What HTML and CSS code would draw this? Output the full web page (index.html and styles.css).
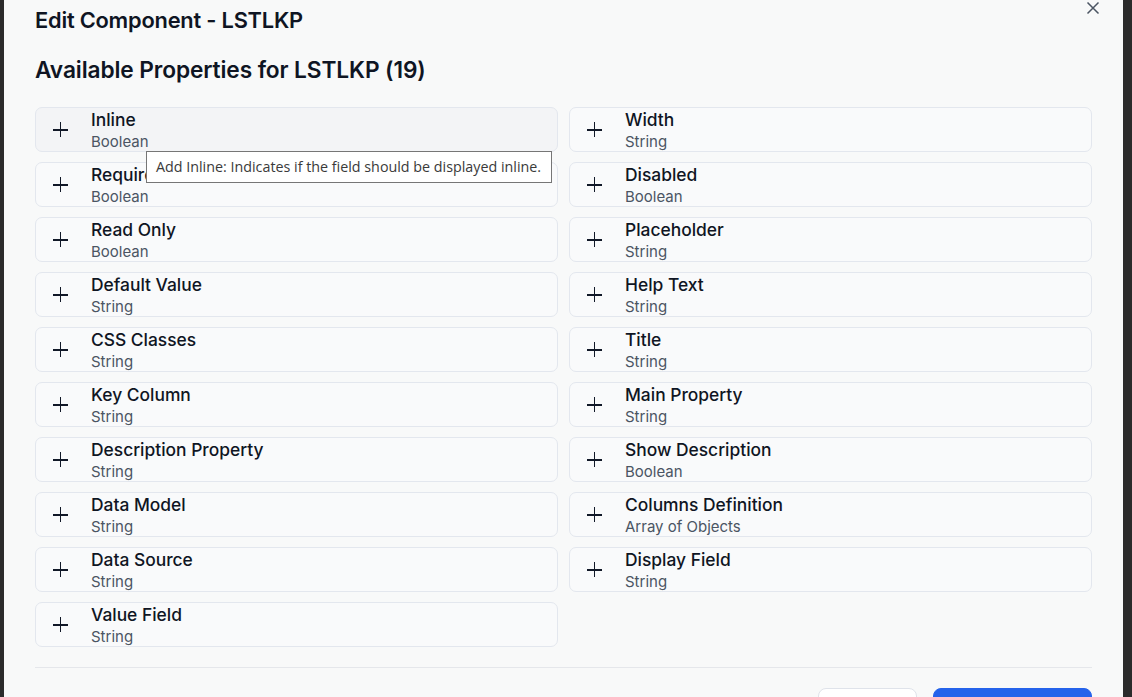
FILE: index.html
```html
<!DOCTYPE html>
<html>
<head>
<meta charset="utf-8">
<link rel="stylesheet" href="styles.css">
</head>
<body>
<div class="modal">
  <button class="close" aria-label="Close">
    <svg width="14" height="14" viewBox="0 0 14 14"><path d="M1.5 1.5 L12.5 12.5 M12.5 1.5 L1.5 12.5" stroke="#4b5563" stroke-width="1.5" fill="none"/></svg>
  </button>
  <h2 class="title">Edit Component - LSTLKP</h2>
  <h3 class="subtitle">Available Properties for LSTLKP (19)</h3>
  <div class="grid">
    <div class="card hover"><span class="plus"></span><div class="txt"><div class="name">Inline</div><div class="type">Boolean</div></div>
      <div class="tooltip">Add Inline: Indicates if the field should be displayed inline.</div>
    </div>
    <div class="card"><span class="plus"></span><div class="txt"><div class="name">Width</div><div class="type">String</div></div></div>
    <div class="card"><span class="plus"></span><div class="txt"><div class="name">Required</div><div class="type">Boolean</div></div></div>
    <div class="card"><span class="plus"></span><div class="txt"><div class="name">Disabled</div><div class="type">Boolean</div></div></div>
    <div class="card"><span class="plus"></span><div class="txt"><div class="name">Read Only</div><div class="type">Boolean</div></div></div>
    <div class="card"><span class="plus"></span><div class="txt"><div class="name">Placeholder</div><div class="type">String</div></div></div>
    <div class="card"><span class="plus"></span><div class="txt"><div class="name">Default Value</div><div class="type">String</div></div></div>
    <div class="card"><span class="plus"></span><div class="txt"><div class="name">Help Text</div><div class="type">String</div></div></div>
    <div class="card"><span class="plus"></span><div class="txt"><div class="name">CSS Classes</div><div class="type">String</div></div></div>
    <div class="card"><span class="plus"></span><div class="txt"><div class="name">Title</div><div class="type">String</div></div></div>
    <div class="card"><span class="plus"></span><div class="txt"><div class="name">Key Column</div><div class="type">String</div></div></div>
    <div class="card"><span class="plus"></span><div class="txt"><div class="name">Main Property</div><div class="type">String</div></div></div>
    <div class="card"><span class="plus"></span><div class="txt"><div class="name">Description Property</div><div class="type">String</div></div></div>
    <div class="card"><span class="plus"></span><div class="txt"><div class="name">Show Description</div><div class="type">Boolean</div></div></div>
    <div class="card"><span class="plus"></span><div class="txt"><div class="name">Data Model</div><div class="type">String</div></div></div>
    <div class="card"><span class="plus"></span><div class="txt"><div class="name">Columns Definition</div><div class="type">Array of Objects</div></div></div>
    <div class="card"><span class="plus"></span><div class="txt"><div class="name">Data Source</div><div class="type">String</div></div></div>
    <div class="card"><span class="plus"></span><div class="txt"><div class="name">Display Field</div><div class="type">String</div></div></div>
    <div class="card"><span class="plus"></span><div class="txt"><div class="name">Value Field</div><div class="type">String</div></div></div>
  </div>
  <div class="footer">
    <button class="btn cancel">Cancel</button>
    <button class="btn primary">Save Changes</button>
  </div>
</div>
</body>
</html>
```
FILE: styles.css
```css
html, body {
  margin: 0;
  padding: 0;
  height: 697px;
  overflow: hidden;
  background: #2b2b2b;
}
body {
  font-family: Inter, "Liberation Sans", sans-serif;
  color: #111827;
}
.modal {
  position: relative;
  margin-left: 4px;
  width: 1119px;
  height: 760px;
  box-sizing: border-box;
  padding: 5px 31px 0 31px;
  background: #f8f9f9;
}
.close {
  position: absolute;
  top: 1px;
  right: 23px;
  width: 14px;
  height: 14px;
  padding: 0;
  border: 0;
  background: none;
  display: flex;
}
.title {
  margin: 0;
  font-size: 21.8px;
  line-height: 30px;
  font-weight: 600;
  letter-spacing: -0.2px;
  color: #0f1523;
}
.subtitle {
  margin: 20px 0 0 0;
  font-size: 22.7px;
  line-height: 30px;
  font-weight: 600;
  letter-spacing: -0.1px;
  color: #0f1523;
}
.grid {
  margin-top: 22px;
  display: grid;
  grid-template-columns: 523px 523px;
  column-gap: 11px;
  row-gap: 10px;
}
.card {
  position: relative;
  height: 45px;
  box-sizing: border-box;
  border: 1px solid #e3e7ee;
  border-radius: 7px;
  background: #f9fafb;
  display: flex;
  align-items: flex-start;
  padding: 1px 0 0 17px;
}
.card.hover {
  background: #f3f4f6;
}
.plus {
  position: relative;
  width: 15px;
  height: 15px;
  margin-top: 13px;
  flex: none;
}
.plus::before, .plus::after {
  content: "";
  position: absolute;
  background: #111827;
}
.plus::before {
  left: 0; right: 0; top: 7px; height: 1.6px;
}
.plus::after {
  top: 0; bottom: 0; left: 6.8px; width: 1.6px;
}
.txt {
  margin-left: 23px;
}
.name {
  font-size: 17.4px;
  line-height: 22px;
  font-weight: 500;
  color: #0f1523;
}
.type {
  font-size: 15px;
  line-height: 22px;
  color: #4b5563;
}
.tooltip {
  position: absolute;
  left: 110px;
  top: 43px;
  z-index: 5;
  background: #ffffff;
  border: 1px solid #767676;
  padding: 5px 10px 6px 9px;
  font-family: "Open Sans", "Noto Sans", sans-serif;
  font-size: 14.3px;
  line-height: 19px;
  color: #3a3a3a;
  white-space: nowrap;
}
.footer {
  margin-top: 20px;
  border-top: 1px solid #e5e7eb;
  padding-top: 20px;
  display: flex;
  justify-content: flex-end;
  gap: 16px;
}
.btn {
  height: 44px;
  padding-top: 14px;
  border-radius: 8px;
  font-family: Inter, "Liberation Sans", sans-serif;
  font-size: 15px;
  font-weight: 500;
}
.cancel {
  width: 99px;
  background: #ffffff;
  border: 1px solid #dfe3ea;
  color: #111827;
}
.primary {
  width: 159px;
  background: #2563eb;
  border: 1px solid #2563eb;
  color: #ffffff;
}
```
